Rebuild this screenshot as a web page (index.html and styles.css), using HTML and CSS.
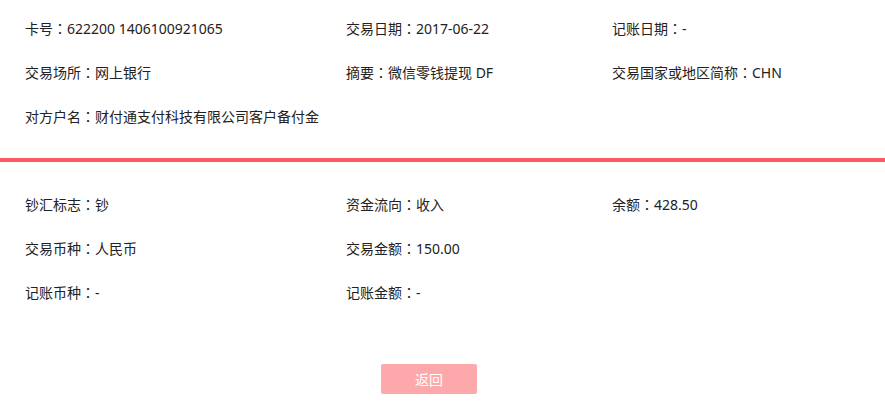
FILE: index.html
```html
<!DOCTYPE html>
<html lang="zh-CN">
<head>
  <meta charset="UTF-8">
  <title>交易明细</title>
  <link rel="stylesheet" href="styles.css">
</head>
<body>
  <div class="detail">
    <div class="info-grid top">
      <div class="item">卡号<span class="colon">：</span>622200 1406100921065</div>
      <div class="item">交易日期<span class="colon">：</span>2017-06-22</div>
      <div class="item">记账日期<span class="colon">：</span>-</div>
      <div class="item">交易场所<span class="colon">：</span>网上银行</div>
      <div class="item">摘要<span class="colon">：</span>微信零钱提现 DF</div>
      <div class="item">交易国家或地区简称<span class="colon">：</span>CHN</div>
      <div class="item">对方户名<span class="colon">：</span>财付通支付科技有限公司客户备付金</div>
    </div>

    <div class="divider"></div>

    <div class="info-grid bottom">
      <div class="item">钞汇标志<span class="colon">：</span>钞</div>
      <div class="item">资金流向<span class="colon">：</span>收入</div>
      <div class="item">余额<span class="colon">：</span>428.50</div>
      <div class="item">交易币种<span class="colon">：</span>人民币</div>
      <div class="item">交易金额<span class="colon">：</span>150.00</div>
      <div class="item"></div>
      <div class="item">记账币种<span class="colon">：</span>-</div>
      <div class="item">记账金额<span class="colon">：</span>-</div>
    </div>

    <div class="actions">
      <button class="btn-back">返回</button>
    </div>
  </div>
</body>
</html>
```

FILE: styles.css
```css
body {
  margin: 0;
  padding: 0;
  background: #fff;
  font-family: "Noto Sans", "Noto Sans CJK SC", sans-serif;
  font-size: 14px;
  color: #222;
}

.info-grid {
  display: grid;
  grid-template-columns: 321px 266px 1fr;
  padding-left: 25px;
}

.info-grid.top {
  padding-top: 6px;
  padding-bottom: 20px;
}

.info-grid.bottom {
  padding-top: 20px;
}

.item {
  height: 44px;
  line-height: 44px;
  white-space: nowrap;
}

/* 冒号居中显示 */
.colon {
  font-family: "Noto Sans CJK TC", sans-serif;
  font-feature-settings: "locl" 0;
}

.divider {
  height: 4px;
  background: #ff5a5f;
}

.actions {
  padding-top: 50px;
  padding-left: 381px;
}

.btn-back {
  width: 96px;
  height: 30px;
  border: none;
  border-radius: 2px;
  background: #fda9ab;
  color: #fff;
  font-family: "Noto Sans CJK SC", sans-serif;
  font-size: 14px;
  cursor: pointer;
}
```
